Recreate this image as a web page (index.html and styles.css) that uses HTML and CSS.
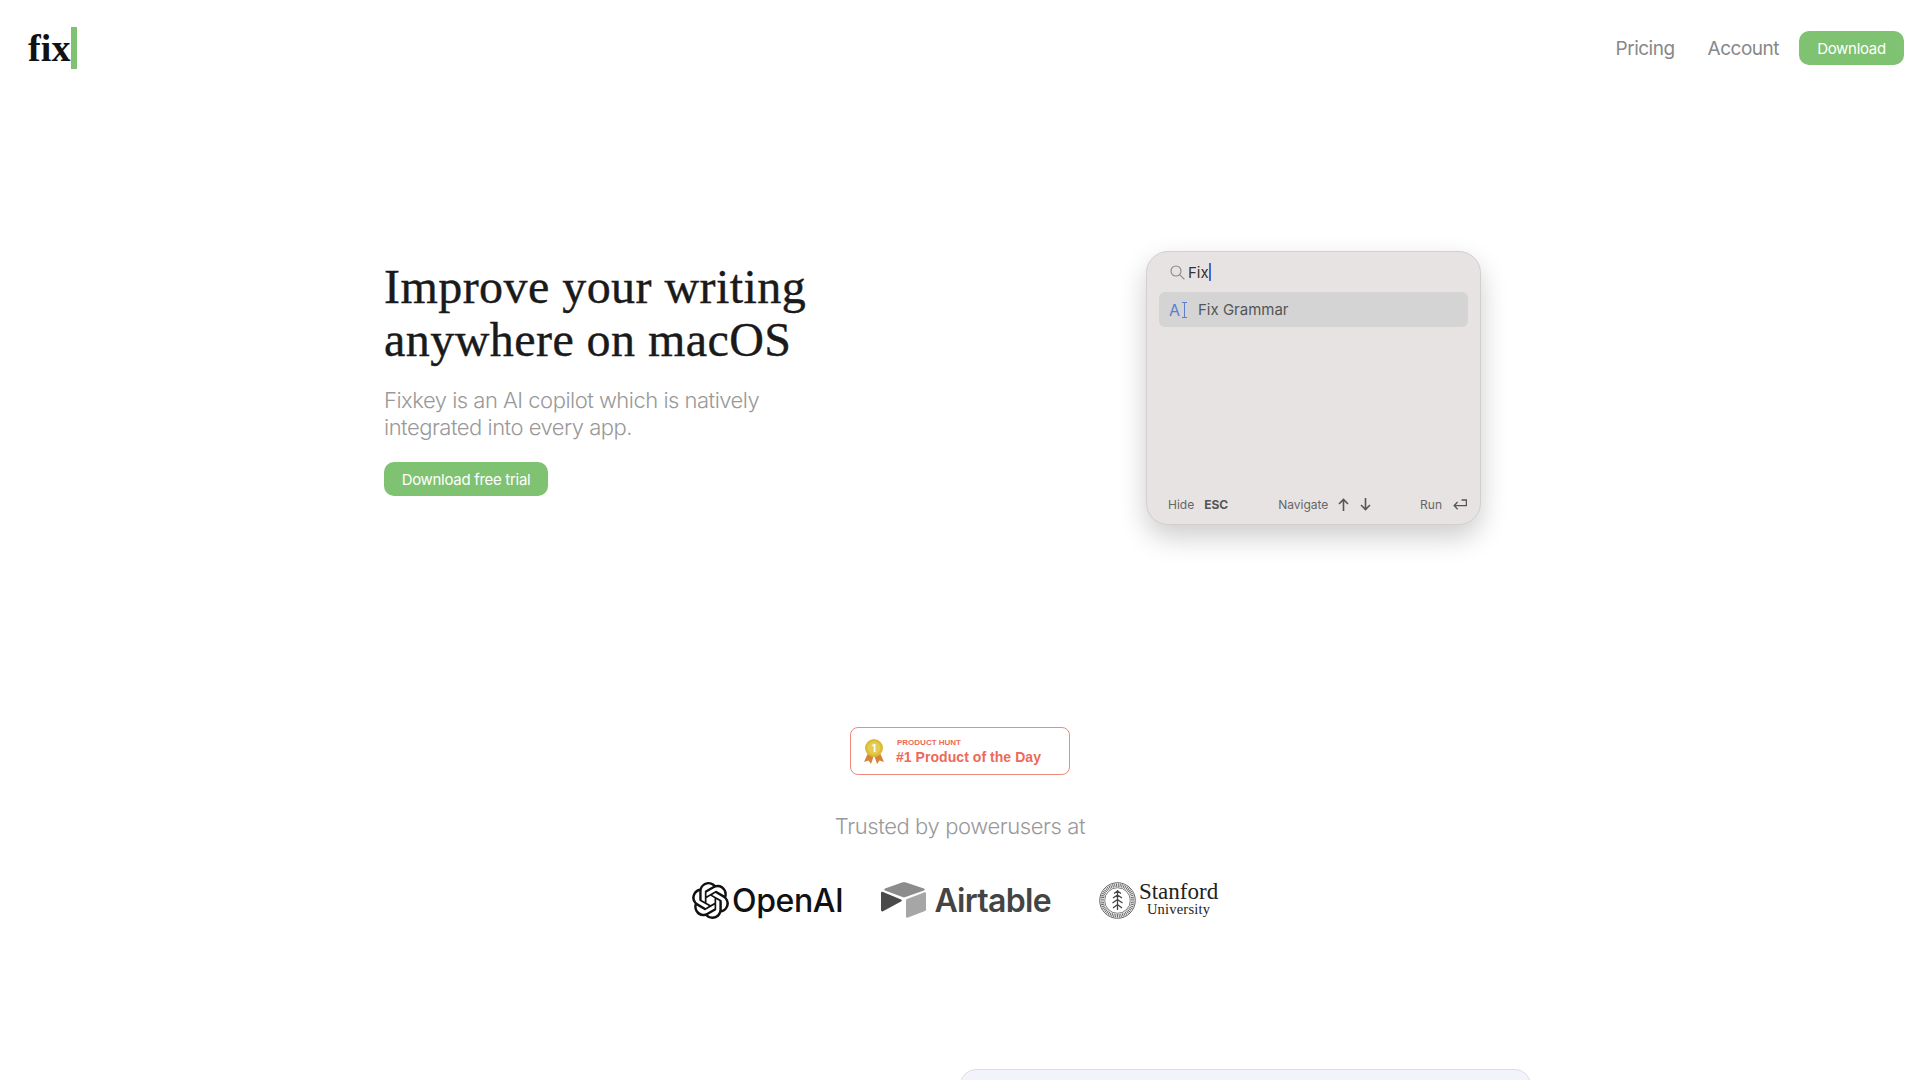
FILE: index.html
```html
<!DOCTYPE html>
<html lang="en">
<head>
    <meta charset="UTF-8">
    <meta name="viewport" content="width=device-width, initial-scale=1.0">
    <title>Fixkey</title>
    <link rel="stylesheet" href="styles.css">
</head>
<body>
    <div class="header">
        <div class="logo"><span>fix</span><i class="logo-caret"></i></div>
        <div class="nav">
            <a class="nav-link" href="#">Pricing</a>
            <a class="nav-link" href="#">Account</a>
            <a class="btn btn-nav" href="#">Download</a>
        </div>
    </div>

    <div class="container">
        <div class="hero">
            <div class="hero-text">
                <h1>Improve your writing<br>anywhere on macOS</h1>
                <p class="hero-sub">Fixkey is an AI copilot which is natively<br>integrated into every app.</p>
                <a class="btn btn-hero" href="#">Download free trial</a>
            </div>
            <div class="panel">
                <div class="panel-search">
                    <svg class="search-icon" width="15" height="15" viewBox="0 0 15 15" fill="none" stroke="#8a8686" stroke-width="1.1"><circle cx="6" cy="6" r="5"/><path d="M9.6 9.6L14.4 14.4"/></svg>
                    <span>Fix</span><i class="search-caret"></i>
                </div>
                <div class="panel-row">
                    <span class="ai-icon">A<i class="ai-beam"></i></span>
                    <span>Fix Grammar</span>
                </div>
                <div class="panel-foot">
                    <div class="foot-group foot-hide"><span>Hide</span><b>ESC</b></div>
                    <div class="foot-group foot-nav">
                        <span>Navigate</span>
                        <svg width="11" height="13" viewBox="0 0 11 13" fill="none" stroke="#555" stroke-width="1.6"><path d="M5.5 13V1.500M1 6L5.500 1.500L10 6"/></svg>
                        <svg width="11" height="13" viewBox="0 0 11 13" fill="none" stroke="#555" stroke-width="1.6"><path d="M5.5 0V11.500M1 7L5.500 11.500L10 7"/></svg>
                    </div>
                    <div class="foot-group foot-run">
                        <span>Run</span>
                        <svg width="14" height="11" viewBox="0 0 14 11" fill="none" stroke="#555" stroke-width="1.3"><path d="M8.500 1H13.400V6.600H1.200M4.600 3L1.200 6.600L4.600 10.200"/></svg>
                    </div>
                </div>
            </div>
        </div>

        <div class="badge">
            <svg width="22" height="25" viewBox="0 0 22 25">
                <path d="M5 14L1 23L5.500 21.500L8 25L11 16Z" fill="#d5843a"/>
                <path d="M17 14L21 23L16.500 21.500L14 25L11 16Z" fill="#d5843a"/>
                <circle cx="11" cy="9" r="9" fill="#dcbc35"/>
                <circle cx="11" cy="9" r="6.500" fill="#e4cb52"/>
                <text x="11" y="12.500" class="medal-num" text-anchor="middle">1</text>
            </svg>
            <div class="badge-text">
                <div class="badge-small">PRODUCT HUNT</div>
                <div class="badge-big">#1 Product of the Day</div>
            </div>
        </div>

        <p class="trusted">Trusted by powerusers at</p>

        <div class="logos">
            <div class="logo-openai">
                <svg width="37" height="37" viewBox="0 0 24 24" fill="#111"><path d="M22.2819 9.8211a5.9847 5.9847 0 0 0-.5157-4.9108 6.0462 6.0462 0 0 0-6.5098-2.9A6.0651 6.0651 0 0 0 4.9807 4.1818a5.9847 5.9847 0 0 0-3.9977 2.9 6.0462 6.0462 0 0 0 .7427 7.0966 5.98 5.98 0 0 0 .511 4.9107 6.051 6.051 0 0 0 6.5146 2.9001A5.9847 5.9847 0 0 0 13.2599 24a6.0557 6.0557 0 0 0 5.7718-4.2058 5.9894 5.9894 0 0 0 3.9977-2.9001 6.0557 6.0557 0 0 0-.7475-7.0729zm-9.022 12.6081a4.4755 4.4755 0 0 1-2.8764-1.0408l.1419-.0804 4.7783-2.7582a.7948.7948 0 0 0 .3927-.6813v-6.7369l2.02 1.1686a.071.071 0 0 1 .038.052v5.5826a4.504 4.504 0 0 1-4.4945 4.4944zm-9.6607-4.1254a4.4708 4.4708 0 0 1-.5346-3.0137l.142.0852 4.783 2.7582a.7712.7712 0 0 0 .7806 0l5.8428-3.3685v2.3324a.0804.0804 0 0 1-.0332.0615L9.74 19.9502a4.4992 4.4992 0 0 1-6.1408-1.6464zM2.3408 7.8956a4.485 4.485 0 0 1 2.3655-1.9728V11.6a.7664.7664 0 0 0 .3879.6765l5.8144 3.3543-2.0201 1.1685a.0757.0757 0 0 1-.071 0l-4.8303-2.7865A4.504 4.504 0 0 1 2.3408 7.872zm16.5963 3.8558L13.1038 8.364 15.1192 7.2a.0757.0757 0 0 1 .071 0l4.8303 2.7913a4.4944 4.4944 0 0 1-.6765 8.1042v-5.6772a.79.79 0 0 0-.407-.667zm2.0107-3.0231l-.142-.0852-4.7735-2.7818a.7759.7759 0 0 0-.7854 0L9.409 9.2297V6.8974a.0662.0662 0 0 1 .0284-.0615l4.8303-2.7866a4.4992 4.4992 0 0 1 6.6802 4.66zM8.3065 12.863l-2.02-1.1638a.0804.0804 0 0 1-.038-.0567V6.0742a4.4992 4.4992 0 0 1 7.3757-3.4537l-.142.0805L8.704 5.459a.7948.7948 0 0 0-.3927.6813zm1.0976-2.3654l2.602-1.4998 2.6069 1.4998v2.9994l-2.5974 1.4997-2.6067-1.4997Z"/></svg>
                <span>OpenAI</span>
            </div>
            <div class="logo-airtable">
                <svg width="45" height="36" viewBox="0 0 45 36">
                    <path d="M21 0.500L4 6.500C3 7 3 8 4 8.400L21.500 15C22.500 15.300 23.500 15.300 24.500 15L43 8.400C44 8 44 7 43 6.500L25 0.500C23.500 0 22.500 0 21 0.500Z" fill="#8c8c8c"/>
                    <path d="M25 18.500V34.500C25 35.500 26 36 27 35.600L44 29C44.700 28.700 45 28.200 45 27.500V11.500C45 10.500 44 10 43 10.400L26 17C25.300 17.300 25 17.800 25 18.500Z" fill="#a6a6a6"/>
                    <path d="M0 10.500V28C0 29.400 1.200 29.600 2 29.200L20 19.500C21.200 18.800 21 18 20 17.500L2 10C1 9.600 0 9.600 0 10.500Z" fill="#4a4a4a"/>
                </svg>
                <span>Airtable</span>
            </div>
            <div class="logo-stanford">
                <svg width="37" height="37" viewBox="0 0 37 37" fill="none" stroke="#444">
                    <circle cx="18.500" cy="18.500" r="17.800" stroke-width="0.8"/>
                    <circle cx="18.500" cy="18.500" r="15.300" stroke-width="3.400" stroke-dasharray="1 0.800" stroke="#666"/>
                    <circle cx="18.500" cy="18.500" r="12.800" stroke-width="0.7"/>
                    <path d="M18.500 8V28M15 11.500L18.500 9L22 11.500M14 16L18.500 13L23 16M13.500 21L18.500 17.500L23.500 21M14 26L18.500 22.500L23 26" stroke-width="1.300"/>
                </svg>
                <div class="stanford-text">
                    <div class="stanford-name">Stanford</div>
                    <div class="stanford-uni">University</div>
                </div>
            </div>
        </div>

        <div class="demo-row">
            <div class="demo-card"></div>
        </div>
    </div>
</body>
</html>
```

FILE: styles.css
```css
* {
    box-sizing: border-box;
}
html, body {
    height: 100vh;
    overflow: hidden;
}
body {
    margin: 0;
    font-family: 'Inter', 'Liberation Sans', sans-serif;
    background-color: #fff;
    color: #333;
}
a {
    text-decoration: none;
}
.header {
    height: 96px;
    padding: 0 16px 0 28px;
    display: flex;
    align-items: center;
    justify-content: space-between;
}
.logo {
    display: flex;
    align-items: center;
    font-family: 'Liberation Serif', serif;
    font-weight: 700;
    font-size: 38px;
    letter-spacing: 0.2px;
    color: #111;
}
.logo-caret {
    width: 6px;
    height: 42px;
    background-color: #7fc272;
}
.nav {
    display: flex;
    align-items: center;
}
.nav-link {
    font-size: 19px;
    letter-spacing: -0.5px;
    color: #888;
    margin-right: 33px;
}
.nav-link + .btn {
    margin-left: -13px;
}
.btn {
    display: flex;
    align-items: center;
    justify-content: center;
    height: 34px;
    border-radius: 10px;
    background-color: #7fc272;
    color: white;
    font-size: 15px;
    letter-spacing: -0.3px;
}
.btn-nav {
    width: 105px;
}
.btn-hero {
    width: 164px;
}
.container {
    width: 1152px;
    margin: 0 auto;
}
.hero {
    padding-top: 155px;
    display: flex;
    justify-content: space-between;
}
.hero-text {
    padding-top: 9px;
}
h1 {
    margin: 0 0 21px;
    font-family: 'Liberation Serif', serif;
    font-weight: 400;
    font-size: 48px;
    line-height: 53px;
    letter-spacing: 0.45px;
    -webkit-text-stroke: 0.4px #1a1a1a;
    color: #1a1a1a;
}
.hero-sub {
    margin: 0 0 21px;
    font-size: 22px;
    font-weight: 300;
    line-height: 27px;
    letter-spacing: -0.5px;
    color: #999;
}
.panel {
    width: 335px;
    height: 274px;
    margin-right: 55px;
    padding: 0 12px;
    display: flex;
    flex-direction: column;
    border: 1px solid #d4cfcf;
    border-radius: 22px;
    background-color: #e8e3e3;
    box-shadow: 0 12px 28px rgba(0,0,0,0.2);
    color: #555;
}
.panel-search {
    height: 40px;
    padding-left: 11px;
    display: flex;
    align-items: center;
    font-size: 15px;
    color: #333;
}
.search-icon {
    margin-right: 3px;
}
.search-caret {
    width: 2px;
    height: 18px;
    background-color: #3a6fd0;
}
.panel-row {
    height: 35px;
    padding-left: 10px;
    display: flex;
    align-items: center;
    border-radius: 6px;
    background-color: #d4d4d4;
    font-size: 15px;
}
.ai-icon {
    width: 29px;
    display: flex;
    align-items: center;
    color: #5a7fd0;
    font-size: 16px;
}
.ai-beam {
    width: 5px;
    height: 16px;
    margin-left: 2px;
    border: solid #5a7fd0;
    border-width: 1px 0;
    background: linear-gradient(#5a7fd0, #5a7fd0) center / 1px 100% no-repeat;
}
.panel-foot {
    height: 40px;
    margin-top: auto;
    padding-top: 1px;
    display: flex;
    align-items: center;
    font-size: 12px;
    color: #666;
}
.foot-group {
    display: flex;
    align-items: center;
}
.foot-hide {
    margin-left: 9px;
    gap: 10px;
}
.foot-hide b {
    color: #555;
}
.foot-nav {
    margin-left: 50px;
    gap: 10px;
}
.foot-nav svg + svg {
    margin-left: 1px;
}
.foot-run {
    margin-left: auto;
    margin-right: 1px;
    gap: 11px;
}
.badge {
    width: 220px;
    height: 48px;
    margin: 202px auto 0;
    padding-left: 12px;
    display: flex;
    align-items: center;
    border: 1px solid #f08a7c;
    border-radius: 8px;
    color: #ec6a58;
}
.medal-num {
    font-size: 10px;
    font-weight: 700;
    fill: #fff;
}
.badge-text {
    margin-left: 11px;
    padding-top: 2px;
    font-family: 'Liberation Sans', sans-serif;
    font-weight: 700;
}
.badge-small {
    margin: 0 0 1px 1px;
    font-size: 8px;
    line-height: 10px;
}
.badge-big {
    font-size: 14px;
    line-height: 17px;
    letter-spacing: 0.05px;
}
.trusted {
    margin: 37px 0 0;
    text-align: center;
    font-size: 22px;
    font-weight: 300;
    line-height: 29px;
    letter-spacing: -0.4px;
    color: #999;
}
.logos {
    height: 40px;
    margin-top: 39px;
    padding-left: 308px;
    display: flex;
    align-items: center;
    gap: 38px;
}
.logo-openai,
.logo-airtable,
.logo-stanford {
    display: flex;
    align-items: center;
}
.logo-openai {
    gap: 3px;
    font-size: 32px;
    font-weight: 500;
    letter-spacing: -0.4px;
    color: #111;
}
.logo-airtable {
    gap: 8px;
    font-size: 32px;
    font-weight: 600;
    letter-spacing: -0.7px;
    color: #444;
}
.logo-stanford {
    margin-left: 10px;
    gap: 3px;
    font-family: 'Liberation Serif', serif;
    color: #222;
    text-align: center;
}
.stanford-text {
    padding-bottom: 2px;
}
.stanford-name {
    font-size: 23px;
    line-height: 20px;
}
.stanford-uni {
    font-size: 14.5px;
    line-height: 15px;
    letter-spacing: 0.2px;
}
.demo-row {
    margin-top: 149px;
    display: flex;
    justify-content: flex-end;
}
.demo-card {
    width: 571px;
    height: 400px;
    margin-right: 5px;
    border: 1px solid #dcdce6;
    border-radius: 16px;
    background-color: #f3f3fb;
}
```
